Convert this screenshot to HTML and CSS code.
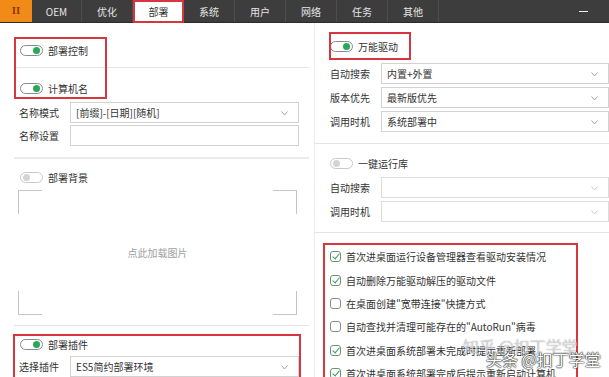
FILE: index.html
```html
<!DOCTYPE html>
<html lang="zh-CN">
<head>
    <meta charset="UTF-8">
    <title>部署</title>
    <link rel="stylesheet" href="styles.css">
</head>
<body>
    <div class="tabs">
        <div class="tab logo">II</div>
        <div class="tab">OEM</div>
        <div class="tab">优化</div>
        <div class="tab active">部署</div>
        <div class="tab">系统</div>
        <div class="tab">用户</div>
        <div class="tab">网络</div>
        <div class="tab">任务</div>
        <div class="tab">其他</div>
        <div class="win-min"></div>
    </div>

    <div class="main">
        <div class="col left">
            <div class="toggle-row first"><span class="toggle on"></span>部署控制</div>
            <div class="divider"></div>
            <div class="toggle-row name-row"><span class="toggle on"></span>计算机名</div>
            <div class="field top">
                <span class="label">名称模式</span>
                <div class="select">[前缀]-[日期][随机]<svg class="chev" width="7" height="5" viewBox="0 0 7 5"><polyline points="0.5,0.5 3.5,4 6.5,0.5" fill="none" stroke="#999" stroke-width="0.9"/></svg></div>
            </div>
            <div class="field">
                <span class="label">名称设置</span>
                <div class="select input"></div>
            </div>
            <div class="divider thick"></div>
            <div class="toggle-row bg-row"><span class="toggle"></span>部署背景</div>
            <div class="picture">点此加载图片</div>
            <div class="divider pic-div"></div>
            <div class="toggle-row plugin-row"><span class="toggle on"></span>部署插件</div>
            <div class="field plugin-field">
                <span class="label">选择插件</span>
                <div class="select">ES5简约部署环境<svg class="chev" width="7" height="5" viewBox="0 0 7 5"><polyline points="0.5,0.5 3.5,4 6.5,0.5" fill="none" stroke="#999" stroke-width="0.9"/></svg></div>
            </div>
        </div>

        <div class="col right">
            <div class="toggle-row first"><span class="toggle on"></span>万能驱动</div>
            <div class="field top">
                <span class="label">自动搜索</span>
                <div class="select">内置+外置<svg class="chev" width="7" height="5" viewBox="0 0 7 5"><polyline points="0.5,0.5 3.5,4 6.5,0.5" fill="none" stroke="#999" stroke-width="0.9"/></svg></div>
            </div>
            <div class="field">
                <span class="label">版本优先</span>
                <div class="select">最新版优先<svg class="chev" width="7" height="5" viewBox="0 0 7 5"><polyline points="0.5,0.5 3.5,4 6.5,0.5" fill="none" stroke="#999" stroke-width="0.9"/></svg></div>
            </div>
            <div class="field">
                <span class="label">调用时机</span>
                <div class="select">系统部署中<svg class="chev" width="7" height="5" viewBox="0 0 7 5"><polyline points="0.5,0.5 3.5,4 6.5,0.5" fill="none" stroke="#999" stroke-width="0.9"/></svg></div>
            </div>
            <div class="divider r-div"></div>
            <div class="toggle-row lib-row"><span class="toggle"></span>一键运行库</div>
            <div class="field top">
                <span class="label">自动搜索</span>
                <div class="select empty"><svg class="chev" width="7" height="5" viewBox="0 0 7 5"><polyline points="0.5,0.5 3.5,4 6.5,0.5" fill="none" stroke="#c4c4c4" stroke-width="0.9"/></svg></div>
            </div>
            <div class="field">
                <span class="label">调用时机</span>
                <div class="select empty"><svg class="chev" width="7" height="5" viewBox="0 0 7 5"><polyline points="0.5,0.5 3.5,4 6.5,0.5" fill="none" stroke="#c4c4c4" stroke-width="0.9"/></svg></div>
            </div>
            <div class="divider r-div2"></div>
            <ul class="checks">
                <li><span class="box checked"></span>首次进桌面运行设备管理器查看驱动安装情况</li>
                <li><span class="box checked"></span>自动删除万能驱动解压的驱动文件</li>
                <li><span class="box"></span>在桌面创建"宽带连接"快捷方式</li>
                <li><span class="box"></span>自动查找并清理可能存在的"AutoRun"病毒</li>
                <li><span class="box checked"></span>首次进桌面系统部署未完成时提示重新部署</li>
                <li><span class="box checked"></span>首次进桌面系统部署完成后提示重新启动计算机</li>
            </ul>
        </div>

        <!-- red annotation frames drawn over the screenshot -->
        <div class="mark m1"></div>
        <div class="mark m2"></div>
        <div class="mark m3"></div>
        <div class="mark m4"></div>

        <div class="wm wm-back">知乎 @扣丁学堂</div>
        <div class="wm wm-front">头条 @扣丁学堂</div>
    </div>
</body>
</html>
```

FILE: styles.css
```css
body {
    margin: 0;
    width: 609px;
    height: 377px;
    overflow: hidden;
    background: #fff;
    color: #333;
    font-family: "Microsoft YaHei", "Noto Sans CJK SC", "Noto Sans", sans-serif;
    font-size: 10px;
}
.tabs {
    display: flex;
    height: 22px;
    background: #3d3d3d;
    border-bottom: 1px solid #2b2b2b;
}
.tab {
    width: 51px;
    display: flex;
    align-items: center;
    justify-content: center;
    color: #e6e6e6;
    border-right: 1px solid #4d4d4d;
    box-sizing: border-box;
}
.tab.logo {
    width: 32px;
    background: #f28a17;
    color: #8c3a06;
    font-weight: bold;
    font-family: "DejaVu Serif", serif;
    font-size: 9px;
    border-right: none;
}
.tab:nth-child(2) {
    width: 50px;
}
.tab.active {
    background: #fff;
    color: #333;
    border: 2px solid #d8363e;
    height: 23px;
}
.win-min {
    margin-left: auto;
    margin-right: 6px;
    width: 40px;
    display: flex;
    align-items: center;
    justify-content: center;
}
.win-min::before {
    content: "";
    width: 9px;
    height: 1px;
    background: #f0f0f0;
}
.main {
    position: relative;
    display: flex;
    height: 354px;
    overflow: hidden;
}
.col {
    display: flex;
    flex-direction: column;
}
.left {
    width: 298px;
    margin-left: 14px;
}
.right {
    flex: 1;
    margin-left: 5px;
    border-left: 1px solid #ececec;
}
.toggle-row {
    display: flex;
    align-items: center;
    gap: 5px;
    height: 22px;
    padding-left: 6px;
    flex-shrink: 0;
}
.right .toggle-row {
    padding-left: 15px;
}
.toggle {
    position: relative;
    width: 23px;
    height: 11px;
    border: 1px solid #8a8a8a;
    border-radius: 7px;
    box-sizing: border-box;
}
.toggle::after {
    content: "";
    position: absolute;
    top: 1px;
    left: 2px;
    width: 7px;
    height: 7px;
    border-radius: 50%;
    background: #d4d4d4;
}
.toggle.on::after {
    left: auto;
    right: 2px;
    background: #28a957;
}
.toggle:not(.on) {
    border-color: #c9c9c9;
}
.left .first { margin-top: 16px; }
.right .first { margin-top: 12px; }
.divider {
    height: 1px;
    background: #e4e4e4;
    flex-shrink: 0;
    margin-top: 6px;
}
.divider.thick {
    height: 2px;
    background: #ebebeb;
    margin-top: 11px;
}
.name-row { margin-top: 9px; }
.bg-row { margin-top: 7px; }
.plugin-row { margin-top: 7px; }
.lib-row { margin-top: 8px; }
.field {
    display: flex;
    align-items: center;
    height: 21px;
    margin-top: 2px;
    padding-left: 5px;
    flex-shrink: 0;
}
.left .field.top { margin-top: 3px; }
.right .field {
    padding-left: 15px;
    margin-top: 3px;
}
.right .field.top { margin-top: 6px; }
.right .lib-row + .field.top { margin-top: 3px; }
.label {
    width: 51px;
    flex-shrink: 0;
}
.select {
    position: relative;
    width: 229px;
    height: 100%;
    border: 1px solid #d2d2d2;
    box-sizing: border-box;
    display: flex;
    align-items: center;
    padding-left: 5px;
    flex-shrink: 0;
}
.right .select {
    width: 228px;
}
.select.empty {
    border-color: #dcdcdc;
}
.chev {
    position: absolute;
    right: 10px;
    top: 8px;
}
.plugin-field { margin-top: 1px; }
.picture {
    margin: 2px 0 0 4px;
    width: 279px;
    height: 125px;
    flex-shrink: 0;
    display: flex;
    align-items: center;
    justify-content: center;
    color: #a0a0a0;
    background:
        linear-gradient(#c6c6c6, #c6c6c6) left top / 24px 1px no-repeat,
        linear-gradient(#c6c6c6, #c6c6c6) left top / 1px 24px no-repeat,
        linear-gradient(#c6c6c6, #c6c6c6) right top / 24px 1px no-repeat,
        linear-gradient(#c6c6c6, #c6c6c6) right top / 1px 24px no-repeat,
        linear-gradient(#c6c6c6, #c6c6c6) left bottom / 24px 1px no-repeat,
        linear-gradient(#c6c6c6, #c6c6c6) left bottom / 1px 24px no-repeat,
        linear-gradient(#c6c6c6, #c6c6c6) right bottom / 24px 1px no-repeat,
        linear-gradient(#c6c6c6, #c6c6c6) right bottom / 1px 24px no-repeat;
}
.pic-div { margin-top: 10px; }
.r-div { margin-top: 11px; }
.r-div2 { margin-top: 10px; }
.checks {
    list-style: none;
    margin: 12px 0 0;
    padding: 0 0 0 15px;
}
.checks li {
    display: flex;
    align-items: center;
    gap: 5px;
    height: 23.4px;
    white-space: nowrap;
}
.box {
    width: 11px;
    height: 11px;
    border: 1px solid #8c8c8c;
    border-radius: 3px;
    box-sizing: border-box;
    flex-shrink: 0;
    position: relative;
}
.box.checked {
    border-color: #6f8f78;
}
.box.checked::after {
    content: "";
    position: absolute;
    left: 2.5px;
    top: 0;
    width: 3px;
    height: 6px;
    border: solid #2ea052;
    border-width: 0 1.5px 1.5px 0;
    transform: rotate(40deg);
}
.mark {
    position: absolute;
    border: 2px solid #d8363e;
    box-sizing: border-box;
}
.m1 { left: 14px; top: 14px; width: 93px; height: 62px; }
.m2 { left: 329px; top: 9px; width: 82px; height: 28px; }
.m3 { left: 13px; top: 311px; width: 288px; height: 60px; }
.m4 { left: 323px; top: 220px; width: 255px; height: 160px; }
.wm {
    position: absolute;
    white-space: nowrap;
    font-size: 16px;
}
.wm-back {
    left: 463px;
    top: 311px;
    color: rgba(255, 255, 255, 0.6);
    text-shadow: 0 0 1px rgba(60, 60, 60, 0.6);
}
.wm-front {
    left: 486px;
    top: 324px;
    color: #fff;
    text-shadow: 0 0 1px #222, 0 0 1px #222, 0 0 2px #333;
}
```
